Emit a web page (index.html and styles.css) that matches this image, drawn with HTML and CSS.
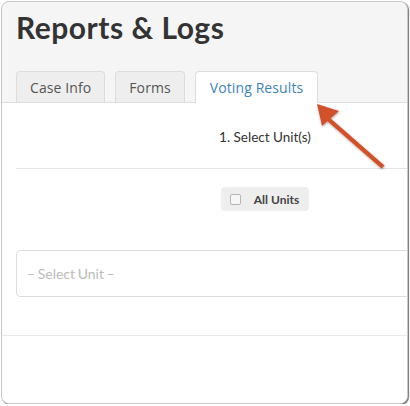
FILE: index.html
```html
<!DOCTYPE html>
<html>
<head>
<meta charset="utf-8">
<link rel="stylesheet" href="styles.css">
</head>
<body>
<div class="window">
  <div class="page">
    <h1 class="title">Reports &amp; Logs</h1>
    <div class="tabs">
      <div class="tab">Case Info</div>
      <div class="tab">Forms</div>
      <div class="tab active">Voting Results</div>
    </div>
    <div class="panel">
      <div class="inner">
        <div class="step">1. Select Unit(s)</div>
        <div class="units">
          <label class="all-units"><span class="check"></span>All Units</label>
        </div>
        <div class="select">– Select Unit –</div>
      </div>
      <div class="foot"></div>
    </div>
  </div>
  <svg class="arrow" width="410" height="406" viewBox="0 0 410 406">
    <defs>
      <filter id="sh" x="-20%" y="-20%" width="140%" height="140%">
        <feDropShadow dx="0.5" dy="1" stdDeviation="0.8" flood-color="#000" flood-opacity="0.35"/>
      </filter>
    </defs>
    <g filter="url(#sh)" fill="#d2512c">
      <path d="M329 117 L384.5 165.5 L381.5 168.5 L326 120 Z"/>
      <path d="M317 104 L339 111 L322 126 Z"/>
    </g>
  </svg>
</div>
</body>
</html>
```
FILE: styles.css
```css
html, body {
  margin: 0;
  padding: 0;
  background: #ffffff;
}
.window {
  position: relative;
  margin: 1px 0 0 1px;
  width: 405px;
  height: 401px;
  border: 1px solid #c9c9c9;
  border-radius: 8px;
  box-shadow: 1px 1px 1px rgba(0,0,0,0.55);
  overflow: hidden;
  background: #f5f5f5;
}
.page {
  width: 526px;
  font-family: "Lato", "Liberation Sans", sans-serif;
}
.title {
  margin: 0;
  padding: 7px 0 0 14px;
  height: 61px;
  box-sizing: border-box;
  font-family: "Lato", sans-serif;
  font-weight: 700;
  font-size: 30px;
  letter-spacing: 0.5px;
  color: #333333;
}
.tabs {
  display: flex;
  gap: 10px;
  padding: 8px 0 0 14px;
  height: 31px;
}
.tab {
  box-sizing: border-box;
  height: 31px;
  padding: 6px 13px 0 13px;
  border: 1px solid #dddddd;
  border-bottom: none;
  border-radius: 4px 4px 0 0;
  background: #eeeeee;
  font-family: "Open Sans", sans-serif;
  font-size: 14px;
  color: #555555;
  letter-spacing: 0.1px;
}
.tab.active {
  background: #ffffff;
  color: #3d84bd;
  height: 32px;
  position: relative;
  z-index: 1;
  padding-left: 14px;
  padding-right: 14px;
}
.panel {
  background: #ffffff;
  border-top: 1px solid #dddddd;
  height: 320px;
}
.inner {
  padding: 0 14px;
}
.step {
  height: 66px;
  border-bottom: 1px solid #e5e5e5;
  display: flex;
  align-items: center;
  justify-content: center;
  font-size: 13.5px;
  color: #333333;
  padding-top: 2px;
  box-sizing: border-box;
}
.units {
  display: flex;
  justify-content: center;
  padding-top: 18px;
  height: 81px;
  box-sizing: border-box;
}
.all-units {
  display: flex;
  align-items: center;
  height: 24px;
  padding: 0 10px 0 9px;
  background: #eeeeee;
  border-radius: 4px;
  font-size: 12px;
  font-weight: 700;
  color: #444444;
}
.check {
  width: 9px;
  height: 9px;
  border: 1px solid #b5b5b5;
  border-radius: 2px;
  background: #f7f7f7;
  margin-right: 13px;
}
.select {
  height: 47px;
  box-sizing: border-box;
  border: 1px solid #dddddd;
  border-radius: 4px;
  padding: 0 0 0 10px;
  display: flex;
  align-items: center;
  font-size: 14px;
  color: #bbbbbb;
  word-spacing: -1px;
}
.foot {
  margin-top: 38px;
  border-top: 1px solid #e8e8e8;
}
.arrow {
  position: absolute;
  left: -2px;
  top: -2px;
  pointer-events: none;
}
```
